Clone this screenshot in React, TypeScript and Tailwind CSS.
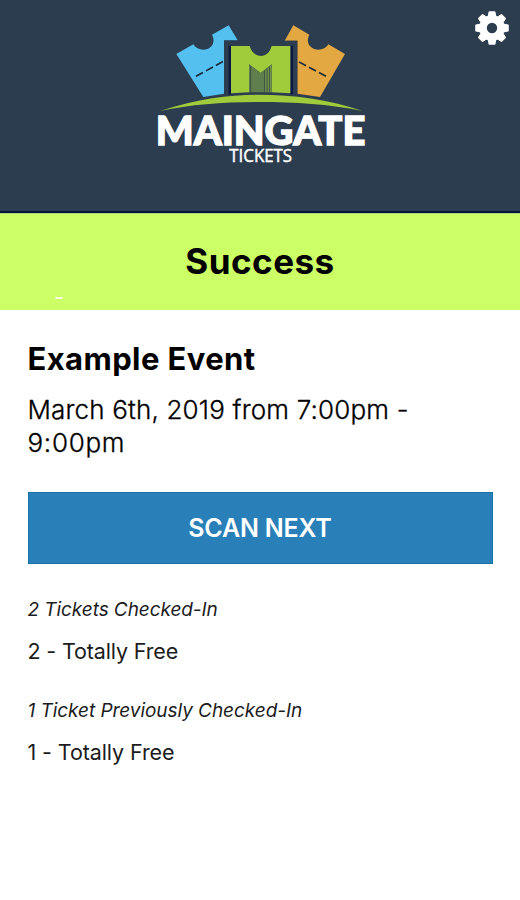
function Logo() {
  return (
    <svg className="h-[160px] w-[220px] overflow-visible" viewBox="0 0 660 480" role="img" aria-label="Maingate Tickets">
      <path fill="#54c0ef" d="M79 117 L130 88 C139 104 164 109 178 99 C192 90 194 73 186 59 L236 31 L263 76 H222 V236 L160 246 Z" />
      <path fill="#e3a842" d="M585 117 L535 88 C526 104 502 109 487 99 C473 90 470 75 478 59 L430 31 L404 77 H442 V236 L510 246 Z" />
      <path stroke="#19283a" strokeWidth="5" strokeDasharray="24 10" fill="none" d="M138 184 L222 138 M528 184 L442 138" />
      <path fill="#2d3d50" d="M222 77 H442 V238 H222 Z" />
      <path fill="#0b1843" d="M236 92 H243 V238 H236 Z M421 92 H429 V238 H421 Z" />
      <path fill="#a0cb3b" d="M243 93 H299 C305 114 320 123 333 123 C347 123 360 113 365 93 H421 V235 L366 232 V148 L332 174 L297 148 V232 L243 235 Z" />
      <path fill="#5f7f4d" d="M297 148 L332 174 L366 148 V232 H297 Z" />
      <path stroke="#3c5149" strokeWidth="3" d="M302 153 V232 M344 166 V232 M351 160 V232 M358 155 V232" />
      <path stroke="#86a847" strokeWidth="2" d="M348 163 V232 M355 158 V232 M362 152 V232" />
      <path fill="#a0cb3b" d="M30 288 C150 249 245 239 330 239 C430 239 535 253 638 288 C535 267 435 261 330 261 C220 261 125 268 30 288 Z" />
      <text x="17" y="391" fontSize="121" fontWeight="900" textLength="629" lengthAdjust="spacingAndGlyphs" fill="#fff" stroke="#fff" strokeWidth="4" className="font-['Lato',sans-serif]">MAINGATE</text>
      <text x="238" y="442" fontSize="55" fontWeight="500" textLength="188" lengthAdjust="spacingAndGlyphs" fill="#fff" stroke="#fff" strokeWidth="1.5" className="font-['Open_Sans',sans-serif]">TICKETS</text>
    </svg>
  );
}

function Gear() {
  return (
    <svg className="h-[34px] w-[34px]" viewBox="-17 -17 34 34" fill="#fff" aria-label="Settings">
      <path
        stroke="#fff"
        strokeWidth="1.6"
        strokeLinejoin="round"
        fillRule="evenodd"
        d="M-2.6 -16 H2.6 L3.6 -11.5 L5.6 -10.7 L9.4 -13.2 L13.2 -9.4 L10.7 -5.6 L11.5 -3.6 L16 -2.6 V2.6 L11.5 3.6 L10.7 5.6 L13.2 9.4 L9.4 13.2 L5.6 10.7 L3.6 11.5 L2.6 16 H-2.6 L-3.6 11.5 L-5.6 10.7 L-9.4 13.2 L-13.2 9.4 L-10.7 5.6 L-11.5 3.6 L-16 2.6 V-2.6 L-11.5 -3.6 L-10.7 -5.6 L-13.2 -9.4 L-9.4 -13.2 L-5.6 -10.7 L-3.6 -11.5 Z M0 -6 A6 6 0 1 0 0 6 A6 6 0 1 0 0 -6 Z"
      />
    </svg>
  );
}

export default function App() {
  return (
    <div className="relative flex h-[900px] w-[520px] flex-col overflow-hidden bg-white font-['Inter',sans-serif] text-black">
      <header className="flex h-[213px] shrink-0 justify-center border-b-2 border-[#07183c] bg-[#2d3d50] pt-[15px]">
        <Logo />
        <button className="absolute top-[11px] right-[11px]">
          <Gear />
        </button>
      </header>
      <section className="relative flex h-[97px] shrink-0 items-center justify-center border-t border-[#b0d777] bg-[#ccff66] pb-[2px]">
        <h1 className="text-[35px] leading-[40px] font-bold tracking-[0.5px]">Success</h1>
        <span className="absolute bottom-[11px] left-[55px] h-[2px] w-[8px] rounded-full bg-[#f4ffdc]" />
      </section>
      <main className="flex flex-col px-[27.5px] pt-[29px]">
        <h2 className="text-[31px] leading-[40px] font-bold tracking-[0.4px]"><span>Example Event</span></h2>
        <p className="mt-[14px] text-[26px] leading-[33px] font-light tracking-[0.17px] [-webkit-text-stroke:0.3px_#000]"><span>March 6th, 2019 from 7:00pm -</span><br /><span className="tracking-[0.7px]">9:00pm</span></p>
        <button className="mt-[33px] h-[72px] border border-[#1772a8] bg-[#2980b9] pt-[2px] text-[25px] font-semibold tracking-[-0.2px] text-white"><span>SCAN NEXT</span></button>
        <p className="mt-[34px] text-[19px] leading-[24px] tracking-[-0.07px] text-[#1c1c1c] italic"><span>2 Tickets Checked-In</span></p>
        <p className="mt-[15px] text-[21.5px] leading-[28px] tracking-[-0.15px] text-[#1c1c1c]"><span>2 - Totally Free</span></p>
        <p className="mt-[34px] text-[19px] leading-[24px] tracking-[-0.05px] text-[#1c1c1c] italic"><span>1 Ticket Previously Checked-In</span></p>
        <p className="mt-[15px] text-[21.5px] leading-[28px] tracking-[-0.1px] text-[#1c1c1c]"><span>1 - Totally Free</span></p>
      </main>
    </div>
  );
}
